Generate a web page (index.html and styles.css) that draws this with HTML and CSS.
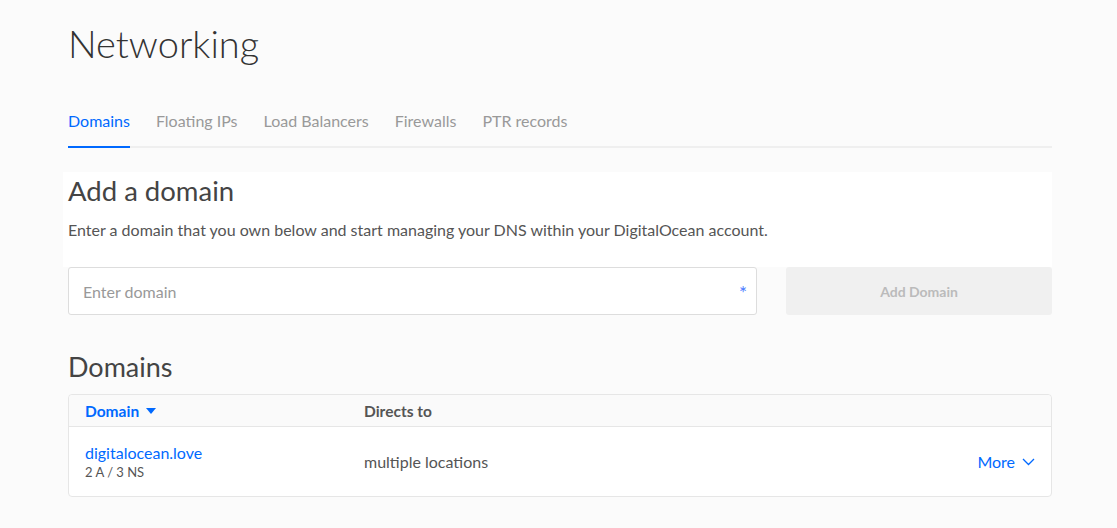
FILE: index.html
```html
<!DOCTYPE html>
<html lang="en">
<head>
    <meta charset="UTF-8">
    <meta name="viewport" content="width=device-width, initial-scale=1.0">
    <title>Networking</title>
    <link rel="stylesheet" href="styles.css">
</head>
<body>
    <div class="page">
        <h1 class="page-title">Networking</h1>

        <nav class="tabs">
            <a class="tab active" href="#">Domains</a>
            <a class="tab" href="#">Floating IPs</a>
            <a class="tab" href="#">Load Balancers</a>
            <a class="tab" href="#">Firewalls</a>
            <a class="tab" href="#">PTR records</a>
        </nav>

        <section class="add-domain">
            <h2>Add a domain</h2>
            <p class="lead">Enter a domain that you own below and start managing your DNS within your DigitalOcean account.</p>
        </section>
        <form class="add-form">
            <div class="field">
                <input type="text" placeholder="Enter domain">
                <span class="required">*</span>
            </div>
            <button type="button" class="btn" disabled>Add Domain</button>
        </form>

        <h2 class="section-title">Domains</h2>
        <div class="table">
            <div class="row head">
                <div class="col name sort">Domain
                    <svg width="10" height="6" viewBox="0 0 10 6"><path d="M0 0h10L5 6z" fill="#0069ff"/></svg>
                </div>
                <div class="col target">Directs to</div>
                <div class="col actions"></div>
            </div>
            <div class="row">
                <div class="col name">
                    <a href="#" class="domain-link">digitalocean.love</a>
                    <div class="records">2 A / 3 NS</div>
                </div>
                <div class="col target">multiple locations</div>
                <div class="col actions">
                    <a href="#" class="more">More
                        <svg width="13" height="8" viewBox="0 0 13 8"><path d="M1 1l5.5 5.5L12 1" fill="none" stroke="#0069ff" stroke-width="1.3"/></svg>
                    </a>
                </div>
            </div>
        </div>
    </div>
</body>
</html>
```

FILE: styles.css
```css
body {
    margin: 0;
    background: #fbfbfb;
    font-family: Lato, "Open Sans", sans-serif;
    color: #444;
}
.page {
    width: 984px;
    margin-left: 68px;
}
.page-title {
    margin: 0;
    padding-top: 19px;
    font-size: 38px;
    font-weight: 300;
    line-height: 48px;
    color: #333;
}
.tabs {
    display: flex;
    gap: 26px;
    margin-top: 44px;
    border-bottom: 2px solid #efefef;
}
.tab {
    font-size: 16px;
    line-height: 20px;
    color: #999;
    text-decoration: none;
    padding-bottom: 15px;
    margin-bottom: -2px;
    border-bottom: 2px solid transparent;
}
.tab.active {
    color: #0069ff;
    border-bottom-color: #0069ff;
}
.add-domain {
    margin-top: 24px;
    margin-left: -5px;
    padding: 2px 0 27px 5px;
    background: #fff;
}
.add-domain h2 {
    margin: 0;
    font-size: 27.5px;
    font-weight: 400;
    line-height: 34px;
    color: #444;
}
.lead {
    margin: 12px 0 0;
    font-size: 16px;
    line-height: 20px;
    color: #555;
}
.add-form {
    display: flex;
    gap: 29px;
}
.field {
    position: relative;
    flex: 1;
}
.field input {
    box-sizing: border-box;
    width: 100%;
    height: 48px;
    padding: 0 14px;
    border: 1px solid #ddd;
    border-radius: 3px;
    background: #fff;
    font-family: inherit;
    font-size: 16px;
    color: #444;
}
.field input::placeholder {
    color: #999;
}
.required {
    position: absolute;
    right: 10px;
    top: 14px;
    font-size: 19px;
    color: #4b7bff;
}
.btn {
    width: 266px;
    height: 48px;
    border: none;
    border-radius: 3px;
    background: #f0f0f0;
    font-family: inherit;
    font-size: 14px;
    font-weight: 700;
    color: #bbb;
}
.section-title {
    margin: 35px 0 0;
    font-size: 27px;
    font-weight: 400;
    line-height: 34px;
    color: #444;
}
.table {
    margin-top: 10px;
    border: 1px solid #e6e6e6;
    border-radius: 4px;
    background: #fff;
}
.row {
    display: flex;
    align-items: center;
    height: 69px;
    padding: 0 16px;
}
.row.head {
    height: 31px;
    background: #fafafa;
    border-bottom: 1px solid #e6e6e6;
    border-radius: 4px 4px 0 0;
    font-size: 15.5px;
    font-weight: 700;
    color: #555;
}
.col.name {
    width: 279px;
}
.col.target {
    flex: 1;
    font-size: 16px;
    color: #555;
}
.head .col.target {
    font-size: 15.5px;
}
.sort {
    color: #0069ff;
    display: flex;
    align-items: center;
    gap: 7px;
}
.domain-link {
    font-size: 16px;
    color: #0069ff;
    text-decoration: none;
}
.records {
    margin-top: 2px;
    font-size: 13px;
    color: #555;
}
.more {
    display: flex;
    align-items: center;
    gap: 7px;
    font-size: 16px;
    color: #0069ff;
    text-decoration: none;
}
```
